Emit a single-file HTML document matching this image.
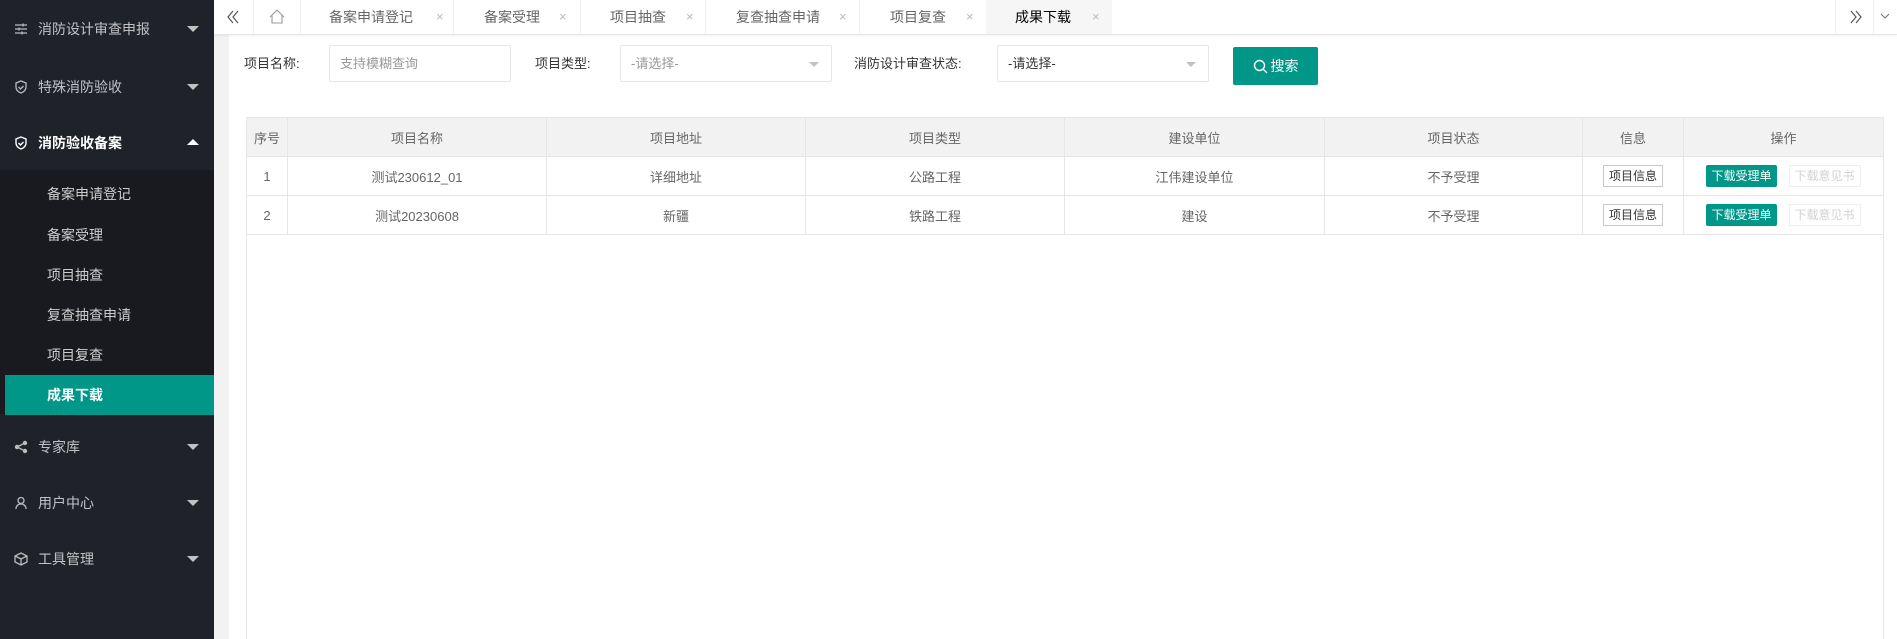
<!DOCTYPE html>
<html><head><meta charset="utf-8">
<style>
*{box-sizing:border-box;margin:0;padding:0}
body{width:1897px;height:639px;overflow:hidden;font-family:"Liberation Sans","Noto Sans CJK SC",sans-serif;font-size:13px;color:#333;background:#fff;position:relative}
.side{position:absolute;left:0;top:0;width:214px;height:639px;background:#20222a}
.mi{position:absolute;left:0;width:214px;height:56px;color:rgba(255,255,255,.72);font-size:14px;line-height:56px}
.mi .ic{position:absolute;left:14px;top:21px;width:14px;height:14px}
.mi .t{position:absolute;left:38px}
.mi .ar{position:absolute;left:187px;top:25px;width:0;height:0;border-left:6px solid transparent;border-right:6px solid transparent;border-top:6px solid #c2c2c2}
.mi .up{border-top:none;border-bottom:6px solid #fff;top:24px}
.sub{position:absolute;left:0;top:170px;width:214px;height:244px;background:#191a1f}
.si{position:absolute;left:0;width:214px;height:40px;line-height:40px;padding-left:47px;color:rgba(255,255,255,.78);font-size:14px}
.si.act{left:5px;width:209px;background:#009688;color:#fff;padding-left:42px}
.gl{position:absolute;left:214px;top:35px;width:15px;height:604px;background:#f2f2f2}
.tabs{position:absolute;left:214px;top:0;width:1683px;height:35px;background:#fff;border-bottom:1px solid #e6e6e6;box-shadow:0 1px 2px rgba(0,0,0,.06)}
.tb{position:absolute;top:0;height:34px;border-right:1px solid #f0f0f0}
.tt{position:absolute;top:0;height:34px;line-height:34px;color:#666;font-size:14px;white-space:nowrap}
.x{position:absolute;top:0;line-height:34px;color:#bbb;font-size:13px}
.lbl{position:absolute;top:53px;font-size:13px;color:#333}
.inp{position:absolute;top:45px;height:37px;border:1px solid #e6e6e6;background:#fff;border-radius:2px;line-height:35px;padding-left:10px;color:#999}
.inp .tri{position:absolute;right:12px;top:16px;border-left:5px solid transparent;border-right:5px solid transparent;border-top:5px solid #c2c2c2}
.btn{position:absolute;left:1233px;top:47px;width:85px;height:38px;background:#009688;border-radius:2px;color:#fff;font-size:14px;line-height:38px;text-align:center}
table{position:absolute;left:246px;top:117px;width:1638px;border-collapse:collapse;font-size:13px;color:#666}
td,th{border:1px solid #e6e6e6;text-align:center;font-weight:normal;height:39px;padding:0}
th{background:#f2f2f2;color:#666}
.vb{position:absolute;left:246px;top:234px;width:1px;height:405px;background:#e6e6e6}
.ib{display:inline-block;border:1px solid #c9c9c9;height:22px;line-height:20px;padding:0 5px;font-size:12px;color:#333;background:#fff}
.gb{display:inline-block;background:#009688;color:#fff;height:22px;line-height:22px;padding:0 5px;font-size:12px;border-radius:2px}
.db{display:inline-block;border:1px solid #eee;color:#d2d2d2;height:22px;line-height:20px;padding:0 5px;font-size:12px;margin-left:12px}
</style></head><body>
<div class="side">
 <div class="mi" style="top:1px"><svg class="ic" viewBox="0 0 14 14" fill="none" stroke="#bbb" stroke-width="1.3"><path d="M1 3h12M1 7h12M1 11h12"/><path d="M9 1.5v3M5 5.5v3M8 9.5v3"/></svg><span class="t">消防设计审查申报</span><span class="ar"></span></div>
 <div class="mi" style="top:59px"><svg class="ic" viewBox="0 0 14 14" fill="none" stroke="#bbb" stroke-width="1.3"><path d="M7 1l5 2v4c0 3-2.5 5-5 6-2.5-1-5-3-5-6V3z"/><path d="M4.5 7l2 2 3-3"/></svg><span class="t">特殊消防验收</span><span class="ar"></span></div>
 <div class="mi" style="top:115px;color:#fff"><svg class="ic" viewBox="0 0 14 14" fill="none" stroke="#fff" stroke-width="1.4"><path d="M7 1l5 2v4c0 3-2.5 5-5 6-2.5-1-5-3-5-6V3z"/><path d="M4.5 7l2 2 3-3"/></svg><span class="t" style="font-weight:bold">消防验收备案</span><span class="ar up"></span></div>
 <div class="sub">
  <div class="si" style="top:4px">备案申请登记</div>
  <div class="si" style="top:45px">备案受理</div>
  <div class="si" style="top:85px">项目抽查</div>
  <div class="si" style="top:125px">复查抽查申请</div>
  <div class="si" style="top:165px">项目复查</div>
  <div class="si act" style="top:205px;font-weight:bold">成果下载</div>
 </div>
 <div class="mi" style="top:419px"><svg class="ic" viewBox="0 0 14 14" fill="#bbb"><circle cx="3" cy="7" r="2.2"/><circle cx="11" cy="3" r="2.2"/><circle cx="11" cy="11" r="2.2"/><path d="M3 7L11 3M3 7l8 4" stroke="#bbb" stroke-width="1.5"/></svg><span class="t">专家库</span><span class="ar"></span></div>
 <div class="mi" style="top:475px"><svg class="ic" viewBox="0 0 14 14" fill="none" stroke="#bbb" stroke-width="1.3"><circle cx="7" cy="4.5" r="3"/><path d="M2 13c0-3 2-5 5-5s5 2 5 5"/></svg><span class="t">用户中心</span><span class="ar"></span></div>
 <div class="mi" style="top:531px"><svg class="ic" viewBox="0 0 14 14" fill="none" stroke="#bbb" stroke-width="1.3"><path d="M7 1l6 3v6l-6 3-6-3V4z"/><path d="M1 4l6 3 6-3M7 7v6"/></svg><span class="t">工具管理</span><span class="ar"></span></div>
</div>
<div class="gl"></div>
<div class="tabs"></div>
<div class="tb" style="left:214px;width:40px"><svg style="position:absolute;left:12px;top:10px" width="14" height="14" viewBox="0 0 14 14" fill="none" stroke="#555" stroke-width="1.2"><path d="M7 1L2 7l5 6M12 1L7 7l5 6"/></svg></div>
<div class="tb" style="left:254px;width:47px"><svg style="position:absolute;left:15px;top:9px" width="16" height="15" viewBox="0 0 16 15" fill="none" stroke="#999" stroke-width="1.1"><path d="M1 8L8 1l7 7M3 6v8h10V6"/></svg></div>
<div class="tb" style="left:301px;width:153px"></div>
<div class="tt" style="left:329px">备案申请登记</div><div class="x" style="left:436px">×</div>
<div class="tb" style="left:454px;width:127px"></div>
<div class="tt" style="left:484px">备案受理</div><div class="x" style="left:559px">×</div>
<div class="tb" style="left:581px;width:125px"></div>
<div class="tt" style="left:610px">项目抽查</div><div class="x" style="left:686px">×</div>
<div class="tb" style="left:706px;width:154px"></div>
<div class="tt" style="left:736px">复查抽查申请</div><div class="x" style="left:839px">×</div>
<div class="tb" style="left:860px;width:126px;border:none"></div>
<div class="tt" style="left:890px">项目复查</div><div class="x" style="left:966px">×</div>
<div class="tb" style="left:986px;width:126px;background:#f6f6f6;border:none"></div>
<div class="tt" style="left:1015px;color:#000">成果下载</div><div class="x" style="left:1092px">×</div>
<div class="tb" style="left:1835px;width:39px;border-left:1px solid #f0f0f0"><svg style="position:absolute;left:13px;top:10px" width="14" height="14" viewBox="0 0 14 14" fill="none" stroke="#555" stroke-width="1.2"><path d="M2 1l5 6-5 6M7 1l5 6-5 6"/></svg></div>
<div class="tb" style="left:1874px;width:23px;border:none"><svg style="position:absolute;left:6px;top:12px" width="10" height="8" viewBox="0 0 10 8" fill="none" stroke="#777" stroke-width="1.1"><path d="M1 2l4 4 4-4"/></svg></div>
<div class="lbl" style="left:244px">项目名称:</div>
<div class="inp" style="left:329px;width:182px">支持模糊查询</div>
<div class="lbl" style="left:535px">项目类型:</div>
<div class="inp" style="left:620px;width:212px">-请选择-<span class="tri"></span></div>
<div class="lbl" style="left:854px">消防设计审查状态:</div>
<div class="inp" style="left:997px;width:212px;color:#333">-请选择-<span class="tri"></span></div>
<div class="btn"><svg style="vertical-align:-3px;margin-right:3px" width="15" height="15" viewBox="0 0 15 15" fill="none" stroke="#fff" stroke-width="1.4"><circle cx="6.5" cy="6.5" r="5"/><path d="M10 10l4 4"/></svg>搜索</div>
<table>
<tr><th style="width:41px">序号</th><th style="width:259px">项目名称</th><th style="width:259px">项目地址</th><th style="width:259px">项目类型</th><th style="width:260px">建设单位</th><th style="width:258px">项目状态</th><th style="width:101px">信息</th><th>操作</th></tr>
<tr><td>1</td><td>测试230612_01</td><td>详细地址</td><td>公路工程</td><td>江伟建设单位</td><td>不予受理</td><td><span class="ib">项目信息</span></td><td><span class="gb">下载受理单</span><span class="db">下载意见书</span></td></tr>
<tr><td>2</td><td>测试20230608</td><td>新疆</td><td>铁路工程</td><td>建设</td><td>不予受理</td><td><span class="ib">项目信息</span></td><td><span class="gb">下载受理单</span><span class="db">下载意见书</span></td></tr>
</table>
<div class="vb"></div>
<div class="vb" style="left:1883px"></div>
</body></html>
